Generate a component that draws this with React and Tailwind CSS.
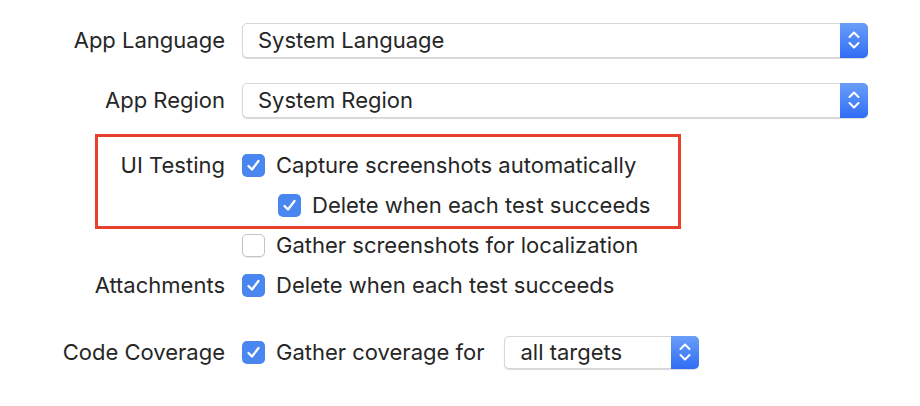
import React from "react";

const font = { fontFamily: "Inter, 'Noto Sans', 'Liberation Sans', sans-serif" };

function Check({ checked = true }) {
  if (!checked) {
    return (
      <div className="w-[23px] h-[23px] rounded-[5px] border border-[#c4c4c4] bg-white shadow-[0_1px_1px_rgba(0,0,0,0.08)] shrink-0" />
    );
  }
  return (
    <div className="w-[23px] h-[23px] rounded-[5px] bg-[#4a86f0] flex items-center justify-center shrink-0">
      <svg width="15" height="15" viewBox="0 0 15 15" fill="none">
        <path d="M2.5 8 L6 11.5 L12.5 3" stroke="white" strokeWidth="2.3" strokeLinecap="round" strokeLinejoin="round" />
      </svg>
    </div>
  );
}

function Stepper() {
  return (
    <div className="w-[28px] self-stretch bg-gradient-to-b from-[#6a9ef8] to-[#2f6cf4] rounded-r-[5px] flex items-center justify-center -my-px -mr-px">
      <svg width="12" height="20" viewBox="0 0 12 20" fill="none">
        <path d="M1.5 7 L6 2.5 L10.5 7" stroke="white" strokeWidth="2" strokeLinecap="round" strokeLinejoin="round" />
        <path d="M1.5 13 L6 17.5 L10.5 13" stroke="white" strokeWidth="2" strokeLinecap="round" strokeLinejoin="round" />
      </svg>
    </div>
  );
}

function Popup({ text, className }) {
  return (
    <div className={"flex items-stretch bg-white border border-[#d6d6d6] rounded-[5px] shadow-[0_1px_1px_rgba(0,0,0,0.15)] " + className}>
      <div className="flex-1 flex items-center pl-[15px] text-[22px] text-[#262626]">{text}</div>
      <Stepper />
    </div>
  );
}

function Row({ label, children, className = "" }) {
  return (
    <div className={"flex items-center h-[40px] " + className}>
      <div className="w-[225px] text-right text-[22px] text-[#262626] shrink-0">{label}</div>
      <div className="ml-[17px] flex items-center flex-1">{children}</div>
    </div>
  );
}

function CheckItem({ checked, text, indent }) {
  return (
    <div className={"flex items-center " + (indent ? "ml-[36px]" : "")}>
      <Check checked={checked} />
      <span className="ml-[11px] text-[22px] text-[#262626]">{text}</span>
    </div>
  );
}

export default function App() {
  return (
    <div className="relative w-[920px] h-[406px] bg-white overflow-hidden" style={font}>
      <div className="flex flex-col pt-[20px]">
        <Row label="App Language">
          <Popup text="System Language" className="w-[626px] h-[35px]" />
        </Row>
        <Row label="App Region" className="mt-[20px]">
          <Popup text="System Region" className="w-[626px] h-[35px]" />
        </Row>
        <Row label="UI Testing" className="mt-[25px]">
          <CheckItem checked text="Capture screenshots automatically" />
        </Row>
        <Row label="">
          <CheckItem checked indent text="Delete when each test succeeds" />
        </Row>
        <Row label="">
          <CheckItem checked={false} text="Gather screenshots for localization" />
        </Row>
        <Row label="Attachments">
          <CheckItem checked text="Delete when each test succeeds" />
        </Row>
        <Row label="Code Coverage" className="mt-[27px]">
          <CheckItem checked text="Gather coverage for" />
          <Popup text="all targets" className="ml-[20px] w-[195px] h-[33px]" />
        </Row>
      </div>
      <div className="absolute left-[95px] top-[134px] w-[586px] h-[95px] border-[3px] border-[#e8402c] pointer-events-none" />
    </div>
  );
}
